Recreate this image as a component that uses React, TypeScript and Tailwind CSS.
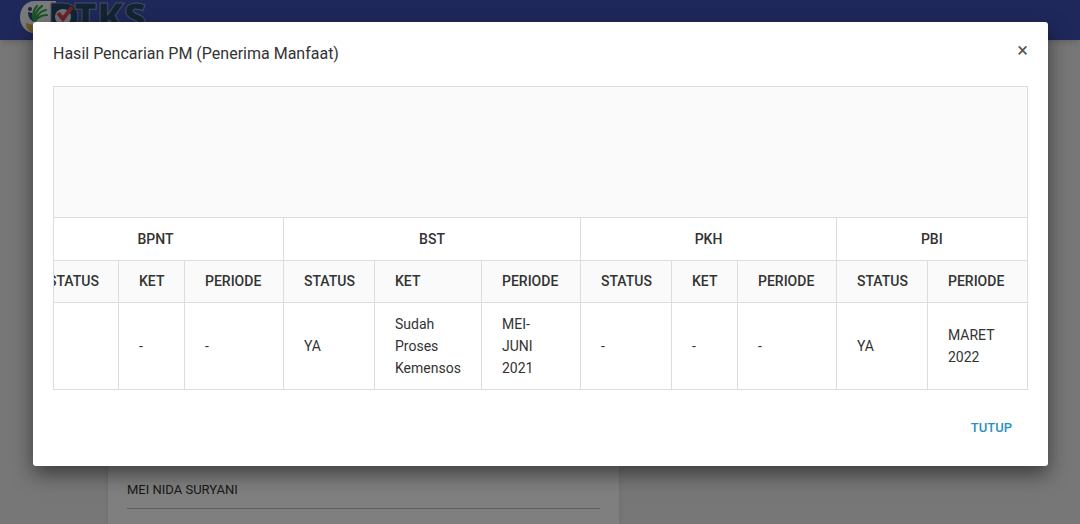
import { useLayoutEffect, useRef } from "react";

const columns = [
  { label: "STATUS", width: "w-[91px]", value: "" },
  { label: "KET", width: "w-[66px]", value: "-" },
  { label: "PERIODE", width: "w-[99px]", value: "-" },
  { label: "STATUS", width: "w-[91px]", value: "YA" },
  { label: "KET", width: "w-[107px]", value: "Sudah Proses Kemensos" },
  { label: "PERIODE", width: "w-[99px]", value: "MEI-\nJUNI 2021" },
  { label: "STATUS", width: "w-[91px]", value: "-" },
  { label: "KET", width: "w-[66px]", value: "-" },
  { label: "PERIODE", width: "w-[99px]", value: "-" },
  { label: "STATUS", width: "w-[91px]", value: "YA" },
  { label: "PERIODE", width: "w-[99px]", value: "MARET\n2022" },
];

const groups = [
  { label: "BPNT", span: 3 },
  { label: "BST", span: 3 },
  { label: "PKH", span: 3 },
  { label: "PBI", span: 2 },
];

function Logo() {
  return (
    <svg width="132" height="36" viewBox="0 0 132 36" role="img" aria-label="DTKS">
      <path d="M15 1H36V33H15C5 33 0 25 0 17S5 1 15 1z" fill="#f4f4f4" />
      <path d="M6 23c6 2 12 3 19 1-1 6-5 9-10 9s-9-4-9-10z" fill="#d3b44d" />
      <circle cx="10" cy="9" r="2" fill="#334c86" />
      <path d="M8 12l4 1 2 9c-4-2-6-5-6-10z" fill="#334c86" />
      <path
        d="M13 18C13 13 14 9 17 6M14 19C15 13 18 9 22 6M15 20C17 15 21 11 26 10M15 21C18 17 22 15 27 15"
        fill="none"
        stroke="#2ea94c"
        strokeWidth="2.2"
        strokeLinecap="round"
      />
      <path d="M31 3h12c9 0 15 5 15 13 0 10-7 17-18 17H31z" fill="#244967" stroke="#8b98b8" />
      <circle cx="43" cy="17" r="8" fill="#dfe2e8" />
      <path d="M38 13l5 6 9-12" fill="none" stroke="#db4052" strokeWidth="4" />
      <text x="54" y="31" fontFamily="Open Sans, sans-serif" fontSize="39" fontWeight="800" fill="#244967" stroke="#8b98b8" strokeWidth="1">TKS</text>
    </svg>
  );
}

export default function App() {
  const scroller = useRef<HTMLDivElement>(null);

  useLayoutEffect(() => {
    if (scroller.current) scroller.current.scrollLeft = scroller.current.scrollWidth;
  }, []);

  return (
    <div className="relative flex h-screen flex-col overflow-hidden bg-[#eeeeee] font-['Roboto',sans-serif] text-[#333333]">
      <header className="h-10 shrink-0 bg-[#3f51b5] pl-5 shadow-md">
        <Logo />
      </header>
      <main className="flex flex-1 pl-[108px]">
        <section className="w-[511px] bg-white px-[19px] pt-[440px] shadow-md">
          <p className="border-b border-[#bdbdbd] pb-2 text-[13px] leading-5">MEI NIDA SURYANI</p>
        </section>
      </main>

      <div className="absolute inset-0 bg-black/50 px-8 pt-[22px]">
        <div
          role="dialog"
          aria-modal="true"
          aria-labelledby="dialog-title"
          className="ml-px rounded-[3px] bg-white px-5 pb-5 shadow-[0_8px_20px_rgba(0,0,0,0.5)]"
        >
          <div className="flex h-16 items-start justify-between">
            <h1 id="dialog-title" className="pt-5 text-base leading-6">
              Hasil Pencarian PM (Penerima Manfaat)
            </h1>
            <button type="button" aria-label="Tutup dialog" className="pt-4 text-xl leading-6 text-[#555555]">
              ×
            </button>
          </div>

          <div ref={scroller} className="overflow-x-auto border border-[#dddddd] [scrollbar-width:none]">
            <table className="w-full min-w-[999px] table-fixed border-collapse text-sm leading-[22px]">
              <colgroup>
                {columns.map((c, i) => (
                  <col key={i} className={c.width} />
                ))}
              </colgroup>
              <thead>
                <tr className="h-[130px] bg-[#fafafa]">
                  <td colSpan={11} />
                </tr>
                <tr>
                  {groups.map((g) => (
                    <th key={g.label} scope="colgroup" colSpan={g.span} className="border-t border-l border-[#dddddd] px-5 py-[10px] text-center font-medium">
                      {g.label}
                    </th>
                  ))}
                </tr>
                <tr className="bg-[#fafafa]">
                  {columns.map((c, i) => (
                    <th key={i} scope="col" className="border-t border-l border-[#dddddd] py-[10px] pl-5 text-left leading-[21px] font-medium">
                      {c.label}
                    </th>
                  ))}
                </tr>
              </thead>
              <tbody>
                <tr>
                  {columns.map((c, i) => (
                    <td key={i} className="border-t border-l border-[#dddddd] py-[10px] pr-[18px] pl-5 whitespace-pre-line">
                      {c.value}
                    </td>
                  ))}
                </tr>
              </tbody>
            </table>
          </div>

          <div className="flex justify-end px-4 pt-5">
            <button type="button" className="h-9 text-[13px] font-medium text-[#2b8fc1]">
              TUTUP
            </button>
          </div>
        </div>
      </div>
    </div>
  );
}
